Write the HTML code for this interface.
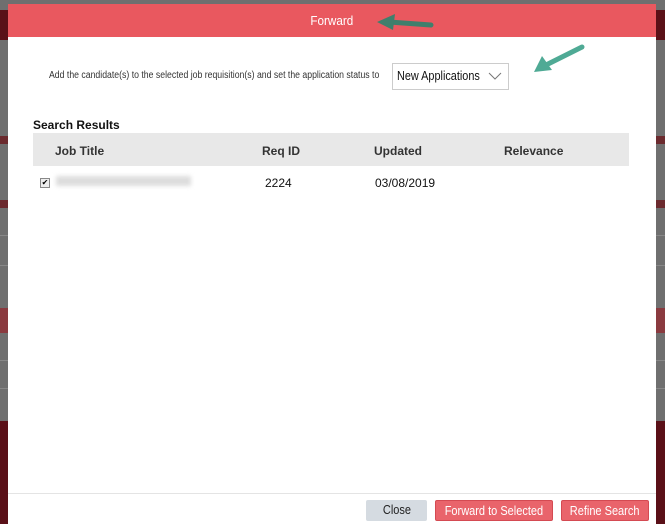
<!DOCTYPE html>
<html><head><style>
body{margin:0;width:665px;height:524px;position:relative;overflow:hidden;background:#6f6f6f;font-family:"Liberation Sans",sans-serif;}
.b{position:absolute;left:0;width:665px}
.dlg{position:absolute;left:8px;top:4px;width:648px;height:520px;background:#fff;}
.hdr{position:absolute;left:0;top:0;width:648px;height:33px;background:#e9585f;color:#fff;font-size:13px;text-align:center;line-height:33px;}
.t{position:absolute;font-size:12px;color:#111;white-space:nowrap}
.btn{position:absolute;top:496px;height:21px;line-height:21px;font-size:12.5px;text-align:center;border-radius:2px;box-sizing:border-box}
.btn span{display:inline-block;transform:scaleX(0.88)}
.r{background:#e9646b;color:#fff;border:1px solid #d44a52}
</style></head><body>
<div class="b" style="top:10px;height:30px;background:#5a1118"></div>
<div class="b" style="top:136px;height:8px;background:#6b2a2e"></div>
<div class="b" style="top:200px;height:8px;background:#6b2a2e"></div>
<div class="b" style="top:235px;height:1px;background:#888"></div>
<div class="b" style="top:265px;height:1px;background:#888"></div>
<div class="b" style="top:308px;height:25px;background:#8a3a3f"></div>
<div class="b" style="top:360px;height:1px;background:#888"></div>
<div class="b" style="top:388px;height:1px;background:#888"></div>
<div class="b" style="top:421px;height:103px;background:#5a1018"></div>
<div class="dlg">
<div class="hdr"><span style="display:inline-block;transform:scaleX(0.9)">Forward</span></div>
<svg style="position:absolute;left:365px;top:8px" width="62" height="22"><path d="M58 13 L16 10" stroke="#3f7f6c" stroke-width="5" stroke-linecap="round"/><path d="M4 10 L22 2 L20 18 Z" fill="#3f7f6c"/></svg>
<svg style="position:absolute;left:518px;top:38px" width="62" height="34"><path d="M56 5 L20 23" stroke="#4faa95" stroke-width="5" stroke-linecap="round"/><path d="M8 30 L16 14 L26 28 Z" fill="#4faa95"/></svg>
<div class="t" style="left:41px;top:66px;font-size:10px;color:#333;transform:scaleX(0.87);transform-origin:0 0">Add the candidate(s) to the selected job requisition(s) and set the application status to</div>
<div style="position:absolute;left:384px;top:59px;width:117px;height:27px;border:1px solid #ccc;box-sizing:border-box"></div>
<div class="t" style="left:389px;top:65px;font-size:12.5px;transform:scaleX(0.87);transform-origin:0 0">New Applications</div>
<svg style="position:absolute;left:480px;top:68px" width="14" height="8"><path d="M1 1 L7 7 L13 1" stroke="#777" fill="none"/></svg>
<div class="t" style="left:25px;top:114px;font-weight:bold">Search Results</div>
<div style="position:absolute;left:25px;top:129px;width:596px;height:33px;background:#e8e8e8"></div>
<div class="t" style="left:47px;top:140px;font-weight:bold;color:#333">Job Title</div>
<div class="t" style="left:254px;top:140px;font-weight:bold;color:#333">Req ID</div>
<div class="t" style="left:366px;top:140px;font-weight:bold;color:#333">Updated</div>
<div class="t" style="left:496px;top:140px;font-weight:bold;color:#333">Relevance</div>
<div style="position:absolute;left:32px;top:174px;width:8px;height:8px;border:1px solid #888;background:#eee;font-size:8px;line-height:8px;text-align:center">✔</div>
<div style="position:absolute;left:48px;top:172px;width:135px;height:10px;background:#ddd;filter:blur(2px)"></div>
<div class="t" style="left:257px;top:172px">2224</div>
<div class="t" style="left:367px;top:172px">03/08/2019</div>
<div style="position:absolute;left:0;top:489px;width:648px;height:1px;background:#e4e4e4"></div>
<div class="btn" style="left:358px;width:61px;background:#d5dbe1;color:#222"><span>Close</span></div>
<div class="btn r" style="left:427px;width:118px"><span>Forward to Selected</span></div>
<div class="btn r" style="left:553px;width:88px"><span>Refine Search</span></div>
</div>
</body></html>
